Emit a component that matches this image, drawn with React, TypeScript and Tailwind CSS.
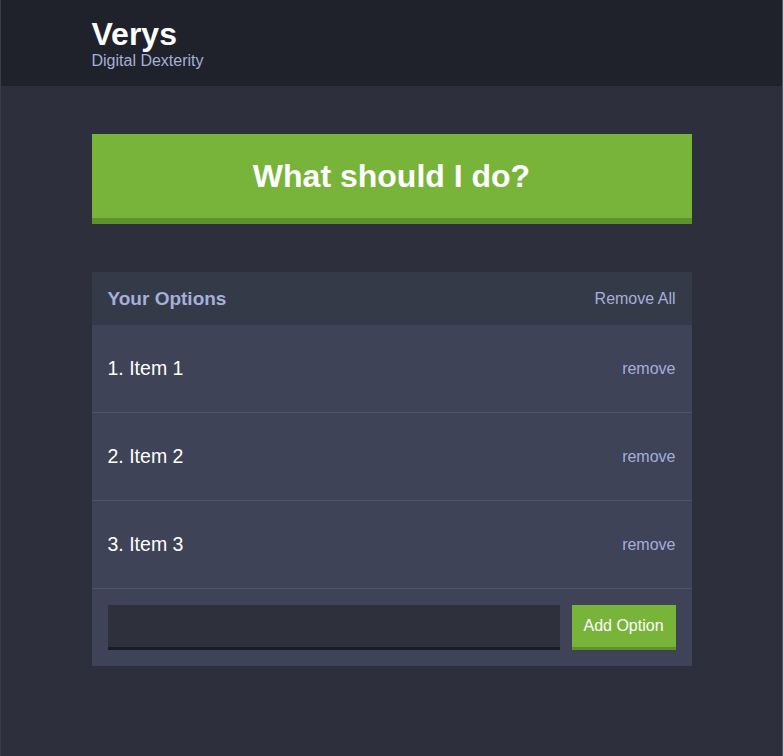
import React, { useState } from "react";

type OptionProps = {
  count: number;
  text: string;
  handleDeleteOption: Function;
};

const Header = () => (
  <header className="h-[86px] bg-[#20222b]">
    <div className="w-[600px] mx-auto pt-[18px]">
      <h1 className="text-[32px] leading-none font-bold text-white">Verys</h1>
      <h2 className="mt-[3px] text-[16px] leading-none text-[#a5afd7]">
        Digital Dexterity
      </h2>
    </div>
  </header>
);

const Option = ({ count, text, handleDeleteOption }: OptionProps) => (
  <div className="flex items-center justify-between h-[88px] px-4 border-b border-[#4d5267]">
    <p className="text-[19.5px] text-white">
      {count}. {text}
    </p>
    <button
      className="text-[16px] text-[#a5afd7]"
      onClick={() => handleDeleteOption(text)}
    >
      remove
    </button>
  </div>
);

export default function App() {
  const [options, setOptions] = useState<string[]>(["Item 1", "Item 2", "Item 3"]);
  const [value, setValue] = useState("");

  const addOption = (e: React.FormEvent) => {
    e.preventDefault();
    const option = value.trim();
    if (!option || options.includes(option)) return;
    setOptions([...options, option]);
    setValue("");
  };

  return (
    <div
      className="min-h-screen bg-[#2d2f3c] border-l border-r border-l-[#3b3d45] border-r-[#555863]"
      style={{ fontFamily: '"Liberation Sans", Arial, sans-serif' }}
    >
      <Header />
      <div className="w-[600px] mx-auto pt-12 pb-12">
        <button
          className="w-full h-[90px] flex items-center justify-center bg-[#78b43a] border-b-[6px] border-[#5f912e] text-white font-bold text-[32px]"
          disabled={options.length === 0}
        >
          What should I do?
        </button>

        <div className="mt-12 bg-[#3e4357]">
          <div className="flex items-center justify-between h-[53px] px-4 pt-px bg-[#353a48]">
            <h3 className="text-[19px] font-bold text-[#a5afd7]">Your Options</h3>
            <button
              className="text-[16px] text-[#a5afd7]"
              onClick={() => setOptions([])}
            >
              Remove All
            </button>
          </div>

          {options.map((option, index) => (
            <Option
              key={option}
              count={index + 1}
              text={option}
              handleDeleteOption={(o: string) =>
                setOptions(options.filter((x) => x !== o))
              }
            />
          ))}

          <form className="flex p-4 gap-3" onSubmit={addOption}>
            <input
              className="flex-1 h-[45px] px-3 bg-[#2e303c] border-b-[3px] border-[#1c1d24] text-white text-[16px] outline-none"
              value={value}
              onChange={(e) => setValue(e.target.value)}
            />
            <button className="w-[104px] h-[45px] bg-[#78b43a] border-b-[3px] border-[#5f912e] text-white text-[16px]">
              Add Option
            </button>
          </form>
        </div>
      </div>
    </div>
  );
}
